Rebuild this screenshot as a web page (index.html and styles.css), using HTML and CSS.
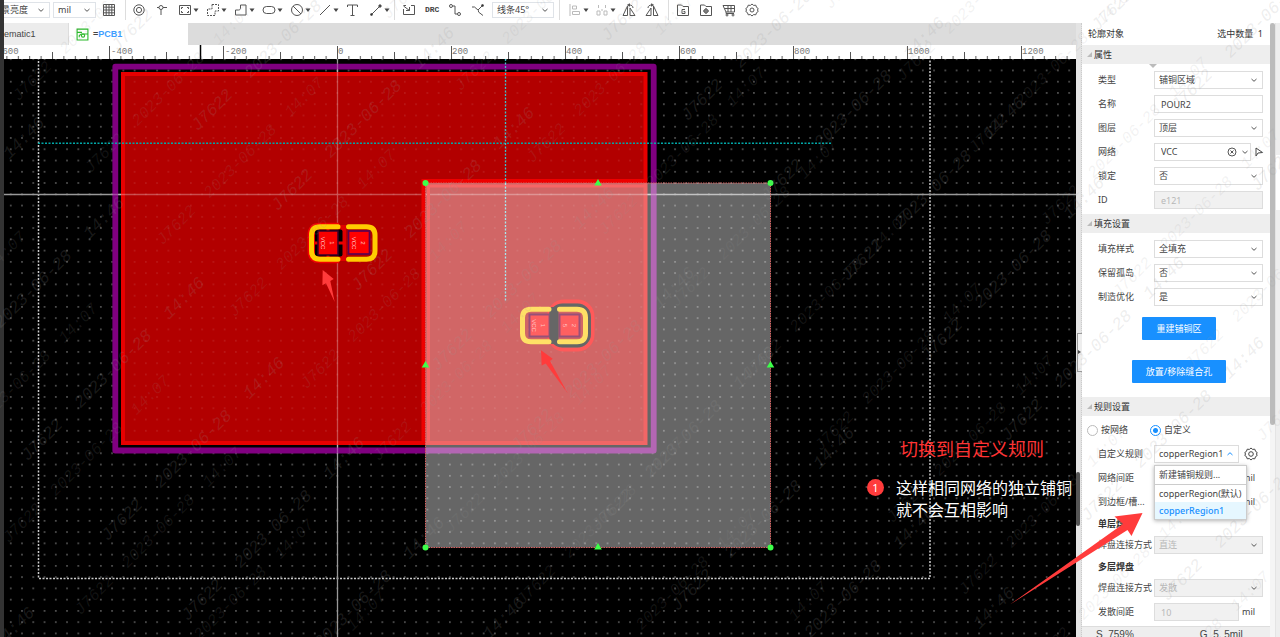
FILE: index.html
```html
<!DOCTYPE html>
<html lang="zh-CN">
<head>
<meta charset="utf-8">
<title>PCB1</title>
<link rel="stylesheet" href="styles.css">
</head>
<body>
<svg class="defs" aria-hidden="true">
  <symbol id="chev" viewBox="0 0 8 8"><path d="M1.5 3 4 5.3 6.500 3"/></symbol>
  <symbol id="caret" viewBox="0 0 8 8"><path d="M1.500 2.500h5L4 6z"/></symbol>
</svg>
<div class="app">
  <div class="edge"></div>
  <div class="main">
    <header class="toolbar">
      <span class="pick pick-light"><select aria-label="背景亮度"><option>景亮度</option></select><svg class="chev"><use href="#chev"/></svg></span>
      <span class="pick pick-unit"><select aria-label="单位"><option>mil</option></select><svg class="chev"><use href="#chev"/></svg></span>
      <button class="tool tool-grid" aria-label="网格"><svg viewBox="0 0 14 14"><path d="M1.500 1.500h11v11h-11zM4.200 1.500v11M7 1.500v11M9.800 1.500v11M1.500 4.200h11M1.500 7h11M1.500 9.800h11"/></svg></button>
      <div class="group">
        <button class="tool" aria-label="焊盘"><svg viewBox="0 0 14 14"><circle cx="7" cy="7" r="5.200"/><circle cx="7" cy="7" r="2.600"/></svg></button>
        <button class="tool" aria-label="过孔"><svg viewBox="0 0 14 14"><circle cx="6" cy="4.500" r="2"/><path d="M8 4.500h4M6 6.500V12M2 4.500h2"/></svg></button>
        <button class="tool drop" aria-label="矩形板框"><svg viewBox="0 0 14 14"><path d="M1.500 2.500h11v9h-11zM3.500 6V4.500H5M9 4.500h1.500V6M3.500 8v1.500H5M9 9.500h1.500V8"/></svg><svg class="caret"><use href="#caret"/></svg></button>
        <button class="tool drop" aria-label="铺铜"><svg viewBox="0 0 14 14"><path stroke-dasharray="2 1" d="M6 1.500h6.500v6.500H9v4.500H1.500V6H6z"/></svg><svg class="caret"><use href="#caret"/></svg></button>
        <button class="tool drop" aria-label="填充"><svg viewBox="0 0 14 14"><path d="M6.500 2h5.500v10H1.500V7h3c1.500 0 2-1 2-2z"/></svg><svg class="caret"><use href="#caret"/></svg></button>
        <button class="tool drop" aria-label="挖槽"><svg viewBox="0 0 14 14"><rect x="1" y="3.500" width="12" height="7" rx="3.500"/></svg><svg class="caret"><use href="#caret"/></svg></button>
        <button class="tool drop" aria-label="禁止区域"><svg viewBox="0 0 14 14"><circle cx="7" cy="7" r="5.500"/><path d="m3 3 8 8"/></svg><svg class="caret"><use href="#caret"/></svg></button>
        <button class="tool drop" aria-label="线条"><svg viewBox="0 0 14 14"><path d="M2 12 12 2"/></svg><svg class="caret"><use href="#caret"/></svg></button>
        <button class="tool" aria-label="文本"><svg viewBox="0 0 14 14"><path d="M1.500 4V2h10v2M6.500 2v10.500M4.500 12.500h4"/></svg></button>
        <button class="tool drop" aria-label="尺寸"><svg viewBox="0 0 14 14"><path d="M3 11 11 3"/><circle class="solid" cx="2.500" cy="11.500" r="1"/><circle class="solid" cx="11" cy="3" r="1.200"/></svg><svg class="caret"><use href="#caret"/></svg></button>
      </div>
      <div class="group group-route">
        <button class="tool" aria-label="导入变更"><svg viewBox="0 0 14 14"><path d="M4 2.500H1.500M1.500 6v5.500h11v-9H9M1.500 3l6 4.500M7.500 4v3.500H4"/></svg></button>
        <button class="tool tool-text">DRC</button>
        <button class="tool" aria-label="单路布线"><svg viewBox="0 0 14 14"><circle cx="3" cy="3" r="1.500"/><circle cx="11" cy="11" r="1.500"/><path d="M4.500 3H7v8h2.500"/></svg></button>
        <button class="tool" aria-label="差分布线"><svg viewBox="0 0 14 14"><path d="M1 4h2.500l4 3.500V9L12 12.500M7 7 11 3"/><circle class="solid" cx="11.500" cy="2.500" r="1"/></svg></button>
        <span class="pick pick-angle"><select aria-label="布线拐角"><option>线条45°</option></select><svg class="chev"><use href="#chev"/></svg></span>
      </div>
      <div class="group group-align">
        <button class="tool drop dim" aria-label="对齐"><svg viewBox="0 0 14 14"><path d="M2 1v12M4.500 3h4v3h-4zM4.500 8.500h7v3h-7z"/></svg><svg class="caret"><use href="#caret"/></svg></button>
        <button class="tool drop dim" aria-label="分布"><svg viewBox="0 0 14 14"><path d="M2 8h3v4H2zM9 8h3v4H9zM3.500 2v3M10.500 2v3M7 6v2"/></svg><svg class="caret"><use href="#caret"/></svg></button>
        <button class="tool" aria-label="左旋转"><svg viewBox="0 0 14 14"><path d="M5.500 3v9.500H1zM8 12.500h5L8 5zM7 2c2.500 0 4 1 4 3M5.500 2 7.500.8v2.400z"/></svg></button>
        <button class="tool" aria-label="右旋转"><svg viewBox="0 0 14 14"><path d="M8.500 3v9.500H13zM6 12.500H1L6 5zM7 2C4.500 2 3 3 3 5M8.500 2 6.500.8v2.400z"/></svg></button>
      </div>
      <div class="group group-out">
        <button class="tool" aria-label="Gerber"><svg viewBox="0 0 14 14"><path d="M1.500 2h4l1.500 1.500h5.500v9h-11zM9 6.500H6v4h3v-2H7.500"/></svg></button>
        <button class="tool" aria-label="坐标文件"><svg viewBox="0 0 14 14"><path d="M1.500 2h4l1.500 1.500h5.500v9h-11zM7 5v6M4 8h6"/><circle cx="7" cy="8" r="2"/></svg></button>
        <button class="tool" aria-label="下单"><svg viewBox="0 0 14 14"><path d="M1 2.500h11.500V9H4zM2.500 5.500h10M6 2.500V9M9 2.500V9M4 9v1.500h8"/><circle cx="5" cy="12" r="1"/><circle cx="11" cy="12" r="1"/></svg></button>
        <button class="tool" aria-label="设置"><svg viewBox="0 0 14 14"><path d="m7 1 1.600 1.400 2.200-.2.700 2.100 1.700 1.200L12.500 7l.7 1.500-1.700 1.200-.7 2.100-2.200-.2L7 13l-1.600-1.400-2.200.2-.7-2.100L.8 8.500 1.500 7 .8 5.500l1.700-1.200.7-2.100 2.200.2z"/><circle cx="7" cy="7" r="2"/></svg></button>
      </div>
    </header>
    <div class="work">
      <div class="editor">
        <nav class="tabs">
          <button class="tab tab-sch">ematic1</button>
          <button class="tab tab-on"><svg class="tab-icon" viewBox="0 0 12 12"><path d="M1 1h10v10H1zM1 4h4.500M3 8.500V7l2-1.500h5.500"/><circle cx="6.500" cy="7" r="1.500"/></svg><span>=</span>PCB1</button>
        </nav>
        <svg class="ruler">
          <defs>
            <pattern id="minor" x="333" width="11.400" height="14" patternUnits="userSpaceOnUse"><path d="M.5 11v3"/></pattern>
            <pattern id="mid" x="333" width="57" height="14" patternUnits="userSpaceOnUse"><path d="M.5 7v7"/></pattern>
            <pattern id="major" x="333" width="114" height="14" patternUnits="userSpaceOnUse"><path d="M.5 1v13"/></pattern>
          </defs>
          <g class="ticks">
            <rect width="100%" height="14" fill="url(#minor)"/>
            <rect width="100%" height="14" fill="url(#mid)"/>
            <rect width="100%" height="14" fill="url(#major)"/>
          </g>
          <path class="mark" d="M196.500 0v14"/>
          <text x="-7" y="9">-600</text><text x="107" y="9">-400</text><text x="221" y="9">-200</text><text x="334" y="9">0</text><text x="448" y="9">200</text><text x="562" y="9">400</text><text x="676" y="9">600</text><text x="790" y="9">800</text><text x="904" y="9">1000</text><text x="1018" y="9">1200</text>
        </svg>
        <div class="canvas">
          <svg class="board">
            <defs>
              <pattern id="dots" x="331.700" y="188.700" width="11.260" height="11.260" patternUnits="userSpaceOnUse"><circle cx="5.600" cy="5.600" r=".8" fill="#fff" fill-opacity=".45"/></pattern>
              <pattern id="dotsFaint" x="331.700" y="188.700" width="11.260" height="11.260" patternUnits="userSpaceOnUse"><circle cx="5.600" cy="5.600" r=".7" fill="#fff" fill-opacity=".2"/></pattern>
            </defs>
            <g transform="translate(-4 -59)" fill="none">
              <rect x="4" y="59" width="3000" height="3000" fill="url(#dots)"/>
              <path d="M38.500 40V578.500H930V40" stroke="#ccc" stroke-width="1.500" stroke-dasharray="2 1.500"/>
              <path d="M4 194.500H3000M337.500 59V3000" stroke="#999" stroke-width="1.300"/>
              <rect x="115.300" y="66.700" width="538.400" height="383.800" stroke="#800080" stroke-width="5.800" stroke-linejoin="round"/>
              <rect x="123" y="74" width="522.500" height="369" fill="#b20000" stroke="#e80000" stroke-width="4"/>
              <rect x="125" y="76" width="519" height="365" fill="url(#dotsFaint)"/>
              <path d="M112 194.500H657M337.500 64V454" stroke="#fff" stroke-opacity=".3" stroke-width="1.300"/>
              <path d="M423.500 443V181H646" stroke="#ee0000" stroke-width="4"/>
              <path d="M428.500 443V186H646" stroke="#f00000" stroke-width="3"/>
              <path d="M38 143.300H831" stroke="#00a8a8" stroke-width="1.500" stroke-dasharray="2 1.500"/>
              <path d="M505.500 59V183" stroke="#40c0c8" stroke-width="1.300" stroke-dasharray="2 1.500"/>
              <rect x="425.500" y="183" width="345" height="364.500" fill="#fff" fill-opacity=".4" stroke="#d86060" stroke-width="1" stroke-dasharray="1.500 1"/>
              <path d="M505.500 183V301" stroke="#a8e8ee" stroke-width="1.300" stroke-dasharray="2 1.500"/>
              <g fill="#3dff4a">
                <circle cx="425.500" cy="183" r="3"/><circle cx="770.500" cy="183" r="3"/><circle cx="425.500" cy="547.500" r="3"/><circle cx="770.500" cy="547.500" r="3"/>
                <path d="m598 179 3.800 6.500h-7.600zM598 543l3.800 6.500h-7.600zM425.500 361l3.800 6.500h-7.600zM770.500 361l3.800 6.500h-7.600z"/>
              </g>
              <path d="M339 226.700h-19q-8.500 0-8.500 8.500v15.500q0 8.500 8.500 8.500h19" stroke="#f00000" stroke-width="8"/>
              <path d="M341 225v36" stroke="#e00000" stroke-width="10"/>
              <rect x="315" y="229.500" width="27.500" height="27" rx="2" fill="#000"/>
              <rect x="318" y="231" width="20" height="24" fill="#f80000"/>
              <path d="M315 243h4M337 243h8M328 228v4M328 254v4" stroke="#e80000" stroke-width="3"/>
              <rect x="318" y="231" width="20" height="24" stroke="#3a0028" stroke-width="1.500"/>
              <path d="M338 226.700h-18q-8.500 0-8.500 8.500v15.500q0 8.500 8.500 8.500h18" stroke="#fc0" stroke-width="5" stroke-linecap="round"/>
              <path d="M348.500 226.700h18q8.500 0 8.500 8.500v15.500q0 8.500-8.500 8.500h-18" stroke="#fc0" stroke-width="5" stroke-linecap="round"/>
              <rect x="348.500" y="231" width="21" height="23" fill="#f00" stroke="#5c0050" stroke-width="1.700"/>
              <rect x="549" y="301.500" width="43.500" height="48" rx="15" stroke="#ff5a5a" stroke-width="4"/>
              <rect x="551.500" y="306" width="37" height="39" rx="11" fill="#d06666" stroke="#666" stroke-width="5"/>
              <rect x="529.500" y="314.500" width="20" height="22" fill="#ff6060" stroke="#985078" stroke-width="2"/>
              <rect x="559.500" y="314.500" width="20" height="22" fill="#ff6060" stroke="#985078" stroke-width="2"/>
              <rect x="549.500" y="307" width="9" height="37" rx="3" fill="#666"/>
              <path d="M549 309.200h-18q-8.500 0-8.500 8.500v15.500q0 8.500 8.500 8.500h18" stroke="#ffe066" stroke-width="5" stroke-linecap="round"/>
              <path d="M559.500 309.200h17.500q8.500 0 8.500 8.500v15.500q0 8.500-8.500 8.500h-17.500" stroke="#ffe066" stroke-width="5" stroke-linecap="round"/>
              <g class="pad-text">
                <text transform="translate(330 243) rotate(90)">1</text><text transform="translate(321 243) rotate(90)">VCC</text>
                <text transform="translate(361 243) rotate(90)">2</text><text transform="translate(352 243) rotate(90)">VCC</text>
                <text transform="translate(541 325.500) rotate(90)">1</text><text transform="translate(532 325.500) rotate(90)">VCC</text>
                <text transform="translate(572 325.500) rotate(90)">2</text><text transform="translate(563 325.500) rotate(90)">5</text>
              </g>
              <g fill="#ff3b3b">
                <path d="m322.700 270 11 9-3.400 2 4.400 21-8.700-18.700-3.600 2z"/>
                <path d="m541 350.300 11.700 8.400-2.700 2.300 17.700 32.300-22-29.700-4 2z"/>
              </g>
            </g>
          </svg>
          <div class="note">
            <p class="note-title">切换到自定义规则</p>
            <div class="note-row"><span class="badge">1</span><p class="note-body">这样相同网络的独立铺铜<br>就不会互相影响</p></div>
          </div>
        </div>
      </div>
      <div class="splitter"><button class="fold" aria-label="折叠"></button><span class="thumb-dark"></span></div>
      <aside class="panel">
        <div class="panel-body">
          <div class="head"><span>轮廓对象</span><span>选中数量&nbsp; 1</span></div>
          <h2 class="section section-first">属性</h2>
          <div class="rows">
            <div class="row"><label for="f1">类型</label><span class="pick"><select id="f1"><option>铺铜区域</option></select><svg class="chev"><use href="#chev"/></svg></span></div>
            <div class="row"><label for="f2">名称</label><input id="f2" class="box" value="POUR2"></div>
            <div class="row"><label for="f3">图层</label><span class="pick"><select id="f3"><option>顶层</option></select><svg class="chev"><use href="#chev"/></svg></span></div>
            <div class="row"><label for="f4">网络</label><span class="pick pick-net"><select id="f4"><option>VCC</option></select><svg class="clear" viewBox="0 0 10 10"><circle cx="5" cy="5" r="4"/><path d="m3.500 3.500 3 3M6.500 3.500l-3 3"/></svg><svg class="chev"><use href="#chev"/></svg></span><button class="picker" aria-label="拾取网络"><svg viewBox="0 0 8 10"><path d="M1 1v8l2-3 4.500-.5z"/></svg></button></div>
            <div class="row"><label for="f5">锁定</label><span class="pick"><select id="f5"><option>否</option></select><svg class="chev"><use href="#chev"/></svg></span></div>
            <div class="row"><label for="f6">ID</label><input id="f6" class="box" value="e121" disabled></div>
          </div>
          <h2 class="section">填充设置</h2>
          <div class="rows rows-fill">
            <div class="row"><label for="f7">填充样式</label><span class="pick"><select id="f7"><option>全填充</option></select><svg class="chev"><use href="#chev"/></svg></span></div>
            <div class="row"><label for="f8">保留孤岛</label><span class="pick"><select id="f8"><option>否</option></select><svg class="chev"><use href="#chev"/></svg></span></div>
            <div class="row"><label for="f9">制造优化</label><span class="pick"><select id="f9"><option>是</option></select><svg class="chev"><use href="#chev"/></svg></span></div>
          </div>
          <div class="actions"><button class="primary">重建铺铜区</button><button class="primary primary-wide">放置/移除缝合孔</button></div>
          <h2 class="section">规则设置</h2>
          <div class="radios"><label><input type="radio" name="rule">按网络</label><label><input type="radio" name="rule" checked>自定义</label></div>
          <div class="rows rows-rule">
            <div class="row"><label for="g1">自定义规则</label>
              <span class="pick pick-rule"><select id="g1"><option>copperRegion1</option></select><svg class="chev chev-up"><use href="#chev"/></svg>
                <span class="menu"><button class="menu-new">新建铺铜规则...</button><button>copperRegion(默认)</button><button class="menu-on">copperRegion1</button></span>
              </span>
              <button class="gear" aria-label="规则管理"><svg viewBox="0 0 14 14"><path d="m7 1 1.600 1.400 2.200-.2.700 2.100 1.700 1.200L12.500 7l.7 1.500-1.700 1.200-.7 2.100-2.200-.2L7 13l-1.600-1.400-2.200.2-.7-2.100L.8 8.500 1.500 7 .8 5.500l1.700-1.200.7-2.100 2.200.2z"/><circle cx="7" cy="7" r="2.300"/></svg></button></div>
            <div class="row"><label for="g2">网络间距</label><input id="g2" class="box box-mil" disabled><span class="unit">mil</span></div>
            <div class="row"><label for="g3">到边框/槽...</label><input id="g3" class="box box-mil" disabled><span class="unit">mil</span></div>
            <h3>单层焊盘</h3>
            <div class="row"><label for="g4">焊盘连接方式</label><span class="pick"><select id="g4" disabled><option>直连</option></select><svg class="chev"><use href="#chev"/></svg></span></div>
            <h3>多层焊盘</h3>
            <div class="row"><label for="g5">焊盘连接方式</label><span class="pick"><select id="g5" disabled><option>发散</option></select><svg class="chev"><use href="#chev"/></svg></span></div>
            <div class="row"><label for="g6">发散间距</label><input id="g6" class="box box-mil" value="10" disabled><span class="unit">mil</span></div>
          </div>
        </div>
        <footer class="status"><span>S&nbsp; 759%</span><span>G&nbsp; 5. 5mil</span></footer>
      </aside>
      <div class="scroll"><span></span></div>
      <div class="rail"></div>
    </div>
  </div>
</div>
<svg class="overlay" aria-hidden="true">
  <path d="m1142.500 513-11 23-4-6L1010 604.500 1123 524l-8.500-7.500z" fill="#ff3b3b"/>
  <g id="watermark"></g>
</svg>
<script src="watermark.js"></script>
</body>
</html>
```
FILE: watermark.js
```js
const layer = document.getElementById("watermark");
const sets = [
  { x: 42, y: 440, along: 250, down: 80, gap: 71, cls: "", words: ["J7622", "2023-06-28", "14:46"] },
  { x: 22, y: 523, along: 226, down: 72, gap: 64, cls: "soft", words: ["J7622", "2023-06-28", "14:07"] }
];
for (const s of sets) {
  for (let n = -6; n < 9; n++) {
    for (let k = -14; k < 16; k++) {
      s.words.forEach((word, i) => {
        const x = s.x + n * s.along + k * s.down + i * s.gap;
        const y = s.y - n * s.along + k * s.down - i * s.gap;
        if (x < -20 || x > innerWidth + 20 || y < -20 || y > innerHeight + 20) return;
        const t = document.createElementNS("http://www.w3.org/2000/svg", "text");
        t.setAttribute("transform", `translate(${x} ${y}) rotate(-45)`);
        t.setAttribute("dy", 5);
        t.setAttribute("class", s.cls);
        t.textContent = word;
        layer.append(t);
      });
    }
  }
}
```
FILE: styles.css
```css
* { box-sizing: border-box; }
body, p, h2, h3 { margin: 0; }
body {
  height: 100vh;
  overflow: hidden;
  font: 9px/12px "Noto Sans", "Noto Sans CJK SC", sans-serif;
  color: #444;
  background: #fff;
}
button, select, input { font: inherit; color: inherit; margin: 0; padding: 0; border: 0; background: none; border-radius: 0; }
svg { display: block; }
.defs { position: absolute; width: 0; height: 0; }
.app { display: flex; height: 100vh; }
.edge { width: 4px; background: #333; flex: none; }
.main { flex: 1; min-width: 0; display: flex; flex-direction: column; }

.toolbar { height: 23px; flex: none; display: flex; align-items: center; padding-bottom: 3px; background: #fff; }
.pick { position: relative; display: block; flex: 1; min-width: 0; }
.pick select { display: block; width: 100%; height: 18px; padding: 0 4px; border: 1px solid #ddd; appearance: none; background: #fff; opacity: 1; }
.pick select:disabled, .box:disabled { background: #f1f1f1; color: #b8b8b8; }
.chev { position: absolute; right: 5px; top: 5px; width: 8px; height: 8px; fill: none; stroke: #555; stroke-width: 1; pointer-events: none; }
.chev-up { transform: scaleY(-1); stroke: #1890ff; }
.toolbar .pick { flex: none; }
.toolbar .pick select { height: 16px; border-color: #dfe3e8; }
.toolbar .chev { top: 4px; }
.pick-light { width: 46px; overflow: hidden; }
.toolbar .pick-light select { padding: 0; border-left: 0; text-indent: -3px; }
.pick-unit { width: 43px; margin-left: 3px; }
.pick-angle { width: 62px; }
.tool { width: 23px; height: 18px; display: flex; align-items: center; flex: none; }
.tool svg { width: 14px; height: 14px; fill: none; stroke: #555; stroke-width: 1; }
.tool .solid { fill: #333; }
.tool .caret { width: 8px; height: 8px; fill: #444; stroke: none; }
.drop { width: 28px; }
.dim svg:first-child { stroke: #bbb; }
.tool-grid { margin-left: 6px; }
.tool-text { font: bold 8px/14px "Liberation Mono", monospace; }
.group { display: flex; align-items: center; height: 20px; border-left: 1px solid #ddd; padding-left: 6px; }
.group-route { margin-left: -3px; padding-left: 7px; }
.group-route .pick-angle { margin-left: -2px; }
.group-align { margin-left: 5px; padding-left: 8px; }
.group-align .drop { width: 27px; }
.group-out { padding-left: 7px; }

.work { flex: 1; min-height: 0; display: flex; }
.editor { flex: 1; min-width: 0; display: flex; flex-direction: column; }
.tabs { height: 22px; flex: none; display: flex; background: #dcdcdc; font: 9px/22px "Liberation Sans", Arial, sans-serif; }
.tab { display: flex; align-items: center; height: 22px; }
.tab-sch { width: 65px; background: #ececec; border-right: 1px solid #ddd; color: #444; }
.tab-on { width: 119px; padding-left: 7px; background: #fff; color: #409eff; font-weight: 600; }
.tab-on span { color: #444; }
.tab-icon { width: 13px; height: 13px; margin-right: 4px; fill: none; stroke: #28b828; stroke-width: 1; }
.ruler { width: 100%; height: 14px; flex: none; background: #fff; stroke: #555; }
.ruler .ticks { stroke: none; }
.ruler pattern { stroke: #555; }
.ruler text { font: 9px "Liberation Mono", monospace; fill: #777; stroke: none; }
.ruler .mark { stroke: #000; stroke-width: 1.5; }
.canvas { position: relative; flex: 1; min-height: 0; background: #000; overflow: hidden; }
.board { width: 100%; height: 100%; }
.pad-text text { font: 6px "Liberation Sans", sans-serif; fill: #ffc4c4; text-anchor: middle; }
.note { position: absolute; left: 863px; top: 378px; }
.note-title { padding-left: 33px; color: #f33; font-size: 18px; line-height: 24px; white-space: nowrap; }
.note-row { display: flex; gap: 12px; margin-top: 16px; }
.badge { width: 17px; height: 17px; margin-top: 2px; border-radius: 50%; background: #ff3b3b; color: #fff; font-size: 11px; line-height: 17px; text-align: center; }
.note-body { color: #fff; font-size: 16px; line-height: 22px; white-space: nowrap; }

.splitter { position: relative; width: 6px; flex: none; background: #e4e4e4; border-right: 1px dotted #ccc; }
.fold { position: absolute; left: 1px; top: 310px; width: 5px; height: 39px; border: 1px solid #999; border-right: 0; background: #eee; }
.fold::before { content: ""; position: absolute; left: 0; top: 16px; border-left: 3px solid #444; border-top: 2px solid transparent; border-bottom: 2px solid transparent; }
.thumb-dark { position: absolute; left: 0; top: 449px; width: 4px; height: 54px; border-radius: 2px; background: #555; }

.panel { width: 188px; flex: none; display: flex; flex-direction: column; background: #fff; }
.panel-body { flex: 1; min-height: 0; overflow: hidden; }
.head { display: flex; justify-content: space-between; padding: 0 7px 0 6px; line-height: 22px; color: #333; }
.section { position: relative; height: 19px; padding-left: 12px; background: #eee; font-size: 9px; line-height: 19px; font-weight: 400; color: #333; }
.section::before { content: ""; position: absolute; left: 5px; top: 7px; border-left: 5px solid transparent; border-bottom: 5px solid #bbb; }
.section-first::after { content: ""; position: absolute; left: 67px; top: 19px; border: 4px solid transparent; border-top-color: #bbb; border-bottom: 0; }
.rows { padding: 4px 7px 2px 16px; }
.row { display: flex; align-items: center; height: 24px; }
.row label { width: 56px; flex: none; white-space: nowrap; }
.box { flex: 1; min-width: 0; height: 18px; padding: 0 6px; border: 1px solid #ddd; background: #fff; }
.box-mil { flex: none; width: 85px; }
.unit { padding-left: 3px; }
.pick-net { flex: none; width: 97px; }
.pick-net .chev { right: 2px; }
.pick-net select { padding-left: 6px; }
.clear { position: absolute; right: 14px; top: 4px; width: 10px; height: 10px; fill: none; stroke: #555; stroke-width: 1; }
.picker { width: 8px; margin-left: 4px; }
.picker svg { width: 8px; height: 10px; fill: none; stroke: #444; stroke-width: 1; }
.actions { display: flex; flex-direction: column; align-items: center; gap: 20px; padding: 6px 0 14px; }
.primary { width: 74px; height: 23px; margin-right: -6px; background: #1890ff; color: #fff; border-radius: 1px; }
.primary-wide { width: 94px; margin-right: -6px; }
.radios { display: flex; gap: 22px; padding: 7px 5px 0; }
.radios label { display: flex; align-items: center; gap: 3px; height: 14px; }
.radios input { appearance: none; width: 11px; height: 11px; border: 1px solid #bbb; border-radius: 50%; background: #fff; }
.radios input:checked { border-color: #1890ff; background: radial-gradient(circle, #1890ff 2px, #fff 3px); }
.rows-rule { padding-top: 5px; }
.rows-rule h3 { font-size: 9px; line-height: 19px; font-weight: 700; color: #333; }
.pick-rule { flex: none; width: 85px; }
.gear { width: 14px; margin-left: 5px; }
.gear svg { width: 14px; height: 14px; fill: none; stroke: #444; stroke-width: 1; }
.menu { position: absolute; z-index: 2; left: 0; top: 20px; width: 93px; background: #fff; border: 1px solid #ccc; box-shadow: 0 1px 4px rgba(0, 0, 0, .3); }
.menu button { display: block; width: 100%; height: 17px; padding: 0 4px; text-align: left; white-space: nowrap; }
.menu .menu-new { height: 19px; border-bottom: 1px solid #ccc; }
.menu .menu-on { background: #e6f7ff; color: #1890ff; font-weight: 500; }
.status { height: 11px; flex: none; display: flex; gap: 66px; padding-left: 14px; overflow: hidden; border-top: 1px solid #ddd; background: #eee; font: 10px/15px "Liberation Sans", Arial, sans-serif; }
.scroll { width: 5px; flex: none; background: #f5f5f5; }
.scroll span { display: block; height: 402px; border-radius: 3px; background: #bbb; }
.rail { width: 5px; flex: none; background: linear-gradient(#eee 132px, #fff 132px, #fff 187px, #eee 187px); border-left: 1px solid #e4e4e4; }

.overlay { position: absolute; inset: 0; width: 100%; height: 100%; pointer-events: none; }
.overlay text { font: italic 17px "Liberation Mono", monospace; fill: #999; fill-opacity: .18; text-anchor: middle; }
.overlay .soft { font-size: 16px; fill-opacity: .13; }
```
